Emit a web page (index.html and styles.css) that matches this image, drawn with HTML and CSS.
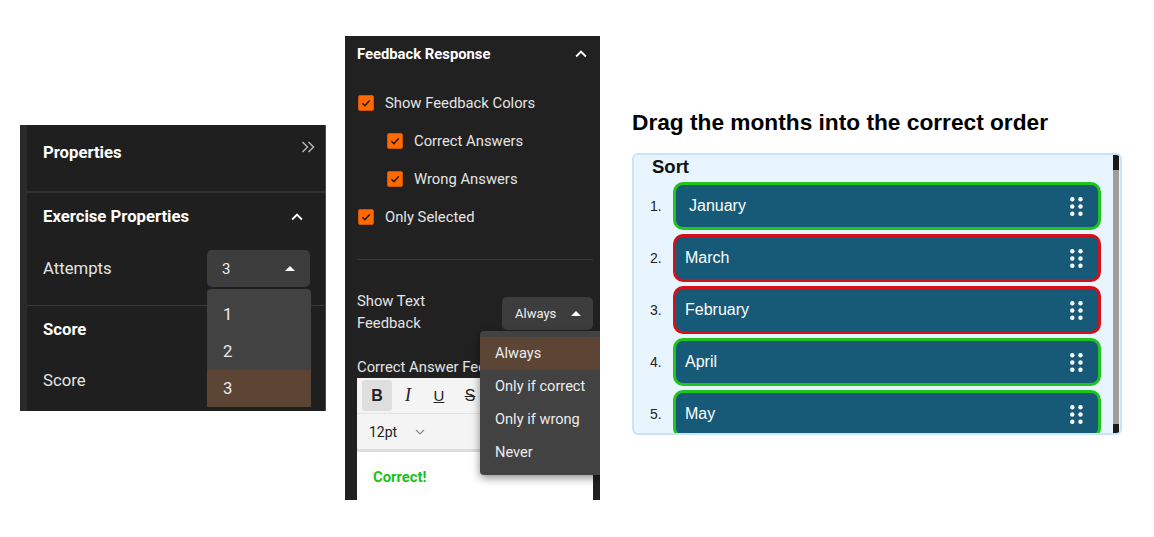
FILE: index.html
```html
<!DOCTYPE html>
<html>
<head>
<meta charset="utf-8">
<title>Sort exercise</title>
<link rel="stylesheet" href="styles.css">
</head>
<body>
<div class="canvas">

  <section class="props">
    <div class="props-head">
      <span class="props-title">Properties</span>
      <svg class="dbl" width="14" height="12" viewBox="0 0 14 12"><path d="M1.5 1 L6.5 6 L1.5 11 M7.5 1 L12.5 6 L7.5 11" fill="none" stroke="#b5b5b5" stroke-width="1.5"/></svg>
    </div>
    <div class="sep thick"></div>
    <div class="sec-head">
      <span>Exercise Properties</span>
      <svg width="22" height="22" viewBox="0 0 24 24"><path d="M7.41 15.41L12 10.83l4.59 4.58L18 14l-6-6-6 6z" fill="#ffffff"/></svg>
    </div>
    <div class="field-row">
      <span class="label">Attempts</span>
      <div class="select sel-attempts"><span>3</span><span class="tri"></span></div>
    </div>
    <div class="sep"></div>
    <div class="sec-head score-head"><span>Score</span></div>
    <div class="plain-row"><span class="label">Score</span></div>
    <ul class="menu menu-attempts">
      <li>1</li>
      <li>2</li>
      <li class="active">3</li>
    </ul>
  </section>

  <section class="feedback">
    <div class="fb-head">
      <span>Feedback Response</span>
      <svg width="22" height="22" viewBox="0 0 24 24"><path d="M7.41 15.41L12 10.83l4.59 4.58L18 14l-6-6-6 6z" fill="#ffffff"/></svg>
    </div>
    <div class="checks">
      <label class="check"><span class="box"><svg width="16" height="16" viewBox="0 0 16 16"><path d="M3.8 8.2 L6.8 11 L12.2 5.2" fill="none" stroke="#2a1a10" stroke-width="1.7"/></svg></span>Show Feedback Colors</label>
      <label class="check nested"><span class="box"><svg width="16" height="16" viewBox="0 0 16 16"><path d="M3.8 8.2 L6.8 11 L12.2 5.2" fill="none" stroke="#2a1a10" stroke-width="1.7"/></svg></span>Correct Answers</label>
      <label class="check nested"><span class="box"><svg width="16" height="16" viewBox="0 0 16 16"><path d="M3.8 8.2 L6.8 11 L12.2 5.2" fill="none" stroke="#2a1a10" stroke-width="1.7"/></svg></span>Wrong Answers</label>
      <label class="check"><span class="box"><svg width="16" height="16" viewBox="0 0 16 16"><path d="M3.8 8.2 L6.8 11 L12.2 5.2" fill="none" stroke="#2a1a10" stroke-width="1.7"/></svg></span>Only Selected</label>
    </div>
    <div class="fb-sep"></div>
    <div class="text-fb-row">
      <span class="fb-label">Show Text<br>Feedback</span>
      <div class="select sel-always"><span>Always</span><span class="tri"></span></div>
    </div>
    <div class="fb-label answer-label">Correct Answer Feedback</div>
    <div class="editor">
      <div class="tb-row">
        <span class="tb-btn on b">B</span>
        <span class="tb-btn i">I</span>
        <span class="tb-btn u">U</span>
        <span class="tb-btn s">S</span>
      </div>
      <div class="tb-row size-row">
        <span class="size">12pt</span>
        <svg width="10" height="6" viewBox="0 0 10 6"><path d="M1 1 L5 5 L9 1" fill="none" stroke="#8a8a8a" stroke-width="1.2"/></svg>
      </div>
      <div class="ed-body"><span class="ok">Correct!</span></div>
    </div>
    <ul class="menu menu-fb">
      <li class="active">Always</li>
      <li>Only if correct</li>
      <li>Only if wrong</li>
      <li>Never</li>
    </ul>
  </section>

  <section class="sorting">
    <h1 class="q-title">Drag the months into the correct order</h1>
    <div class="sort-box">
      <div class="sort-content">
        <div class="sort-title">Sort</div>
        <ol class="sort-list">
          <li><span class="num">1.</span><div class="item good first"><span>January</span><svg class="handle" width="13" height="19" viewBox="0 0 13 19"><circle cx="2.3" cy="2.3" r="2.2"/><circle cx="10.5" cy="2.3" r="2.2"/><circle cx="2.3" cy="9.5" r="2.2"/><circle cx="10.5" cy="9.5" r="2.2"/><circle cx="2.3" cy="16.7" r="2.2"/><circle cx="10.5" cy="16.7" r="2.2"/></svg></div></li>
          <li><span class="num">2.</span><div class="item bad"><span>March</span><svg class="handle" width="13" height="19" viewBox="0 0 13 19"><circle cx="2.3" cy="2.3" r="2.2"/><circle cx="10.5" cy="2.3" r="2.2"/><circle cx="2.3" cy="9.5" r="2.2"/><circle cx="10.5" cy="9.5" r="2.2"/><circle cx="2.3" cy="16.7" r="2.2"/><circle cx="10.5" cy="16.7" r="2.2"/></svg></div></li>
          <li><span class="num">3.</span><div class="item bad"><span>February</span><svg class="handle" width="13" height="19" viewBox="0 0 13 19"><circle cx="2.3" cy="2.3" r="2.2"/><circle cx="10.5" cy="2.3" r="2.2"/><circle cx="2.3" cy="9.5" r="2.2"/><circle cx="10.5" cy="9.5" r="2.2"/><circle cx="2.3" cy="16.7" r="2.2"/><circle cx="10.5" cy="16.7" r="2.2"/></svg></div></li>
          <li><span class="num">4.</span><div class="item good"><span>April</span><svg class="handle" width="13" height="19" viewBox="0 0 13 19"><circle cx="2.3" cy="2.3" r="2.2"/><circle cx="10.5" cy="2.3" r="2.2"/><circle cx="2.3" cy="9.5" r="2.2"/><circle cx="10.5" cy="9.5" r="2.2"/><circle cx="2.3" cy="16.7" r="2.2"/><circle cx="10.5" cy="16.7" r="2.2"/></svg></div></li>
          <li><span class="num">5.</span><div class="item good"><span>May</span><svg class="handle" width="13" height="19" viewBox="0 0 13 19"><circle cx="2.3" cy="2.3" r="2.2"/><circle cx="10.5" cy="2.3" r="2.2"/><circle cx="2.3" cy="9.5" r="2.2"/><circle cx="10.5" cy="9.5" r="2.2"/><circle cx="2.3" cy="16.7" r="2.2"/><circle cx="10.5" cy="16.7" r="2.2"/></svg></div></li>
        </ol>
      </div>
      <div class="scrollbar"><span class="sb-top"></span><span class="sb-track"></span><span class="sb-bottom"></span></div>
    </div>
  </section>

</div>
</body>
</html>
```

FILE: styles.css
```css
* { box-sizing: border-box; }
html, body { margin: 0; padding: 0; background: #ffffff; }
body { width: 1154px; height: 537px; overflow: hidden; font-family: Roboto, "Noto Sans", sans-serif; }

.canvas { display: flex; align-items: flex-start; padding-left: 20px; }

/* ---------- Properties panel ---------- */
.props {
  position: relative;
  width: 306px;
  height: 286px;
  margin-top: 125px;
  background: #1f1f1f;
  border-left: 7px solid #2a2a2a;
  border-right: 1px solid #4a4a4a;
  overflow: hidden;
  color: #e4e4e4;
}
.props-head {
  height: 66px;
  display: flex;
  justify-content: space-between;
  align-items: flex-start;
  padding: 18px 10px 0 16px;
}
.props-title { font-size: 16.7px; font-weight: 700; line-height: 20px; color: #ffffff; }
.dbl { margin-top: -2px; }
.sep { height: 1px; background: #3a3a3a; }
.sep.thick { height: 2px; background: #333333; }
.sec-head {
  height: 47px;
  display: flex;
  align-items: center;
  justify-content: space-between;
  padding: 0 17px 0 16px;
  font-size: 16.7px;
  font-weight: 700;
  color: #ffffff;
}
.score-head { height: 46px; }
.field-row {
  height: 37px;
  margin: 10px 0 18px;
  display: flex;
  align-items: center;
  justify-content: space-between;
  padding: 0 15px 0 16px;
}
.label { font-size: 16.7px; color: #e4e4e4; }
.plain-row { height: 36px; margin-top: 10px; display: flex; align-items: center; padding-left: 16px; }
.select {
  display: flex;
  align-items: center;
  justify-content: space-between;
  background: #3d3d3d;
  border-radius: 5px;
  color: #f0f0f0;
}
.sel-attempts { width: 103px; height: 37px; padding: 0 15px 0 15px; font-size: 15px; }
.tri {
  width: 0; height: 0;
  border-left: 5px solid transparent;
  border-right: 5px solid transparent;
  border-bottom: 5px solid #ffffff;
}
.menu {
  position: absolute;
  list-style: none;
  margin: 0;
  background: #424242;
  border-radius: 4px;
  color: #ececec;
}
.menu-attempts { left: 180px; top: 164px; width: 104px; padding: 7px 0 0; font-size: 16.7px; }
.menu-attempts li { height: 37px; line-height: 37px; padding-left: 16px; }
.menu li.active { background: #5d4536; }

/* ---------- Feedback panel ---------- */
.feedback {
  position: relative;
  width: 255px;
  height: 464px;
  margin-top: 36px;
  margin-left: 19px;
  background: #212121;
  overflow: hidden;
  padding: 0 7px 0 12px;
  color: #e4e4e4;
  font-size: 14.8px;
}
.fb-head {
  height: 36px;
  display: flex;
  align-items: center;
  justify-content: space-between;
  padding-right: 1px;
  font-weight: 700;
  color: #ffffff;
}
.checks { margin-top: 12px; display: flex; flex-direction: column; }
.check { height: 38px; display: flex; align-items: center; gap: 11px; padding-left: 1px; }
.check.nested { padding-left: 30px; }
.box {
  width: 16px; height: 16px;
  background: #ff6a00;
  border: 1px solid #d35400;
  border-radius: 2px;
  display: flex;
  align-items: center;
  justify-content: center;
}
.box svg { width: 14px; height: 14px; }
.fb-sep { height: 1px; background: #3a3a3a; margin-top: 23px; }
.text-fb-row { display: flex; justify-content: space-between; align-items: flex-start; padding-top: 30px; }
.fb-label { line-height: 22px; color: #e4e4e4; }
.sel-always { width: 91px; height: 33px; margin-top: 7px; padding: 0 12px 0 13px; font-size: 13px; }
.answer-label { white-space: nowrap; margin-top: 22px; }
.editor { background: #ffffff; height: 160px; }
.tb-row {
  height: 36px;
  display: flex;
  align-items: center;
  gap: 1px;
  padding: 0 5px;
  background: #f4f4f4;
  border-bottom: 1px solid #e2e2e2;
  color: #222222;
}
.tb-btn {
  width: 30px; height: 31px;
  display: flex; align-items: center; justify-content: center;
  border-radius: 3px;
  font-size: 16px;
}
.tb-btn.on { background: #dedede; }
.tb-btn.b { font-family: "Liberation Sans", sans-serif; font-weight: 700; }
.tb-btn.i { font-family: "Liberation Serif", serif; font-style: italic; font-size: 18px; }
.tb-btn.u { font-family: "Liberation Sans", sans-serif; text-decoration: underline; font-size: 15px; }
.tb-btn.s { font-family: "Liberation Sans", sans-serif; text-decoration: line-through; font-size: 16px; }
.size-row { height: 38px; padding-left: 12px; gap: 18px; border-bottom: 3px solid #dddddd; }
.size { font-size: 14px; color: #222222; }
.ed-body { padding: 16px 0 0 16px; }
.ok { color: #19c219; font-weight: 700; font-size: 14.8px; line-height: 16px; }
.menu-fb {
  left: 135px; top: 295px; width: 140px;
  padding: 6px 0;
  font-size: 14.6px;
  box-shadow: 0 3px 8px rgba(0,0,0,0.45);
}
.menu-fb li { height: 33px; line-height: 33px; padding-left: 15px; white-space: nowrap; }

/* ---------- Sorting exercise ---------- */
.sorting { margin-left: 32px; margin-top: 108px; width: 490px; font-family: "Liberation Sans", Arial, sans-serif; }
.q-title { margin: 0; font-size: 22.7px; line-height: 28px; font-weight: 700; color: #000000; white-space: nowrap; }
.sort-box {
  margin-top: 17px;
  height: 282px;
  border: 2px solid #c9e4f7;
  border-radius: 6px;
  background: #e8f4fe;
  display: flex;
  overflow: hidden;
}
.sort-content { flex: 1; padding: 1px 12px 0 16px; }
.sort-title { margin-left: 2px; font-size: 18.5px; font-weight: 700; line-height: 22px; color: #111111; }
.sort-list { list-style: none; margin: 4px 0 0; padding: 0; display: flex; flex-direction: column; gap: 4px; }
.sort-list li { display: flex; align-items: center; }
.num { width: 23px; font-size: 14px; color: #222222; }
.item {
  width: 428px;
  height: 48px;
  border: 3px solid #1fc41f;
  border-radius: 10px;
  background: #165a78;
  display: flex;
  align-items: center;
  justify-content: space-between;
  padding: 0 15px 0 9px;
  color: #ffffff;
  font-size: 16px;
}
.item.first { padding-left: 13px; }
.item.bad { border-color: #d4111b; }
.handle { fill: #ffffff; }
.scrollbar { width: 7px; display: flex; flex-direction: column; margin-right: 1px; }
.sb-top { height: 15px; background: #1a1a1a; }
.sb-track { flex: 1; background: #9e9e9e; }
.sb-bottom { height: 9px; background: #1a1a1a; }
```
